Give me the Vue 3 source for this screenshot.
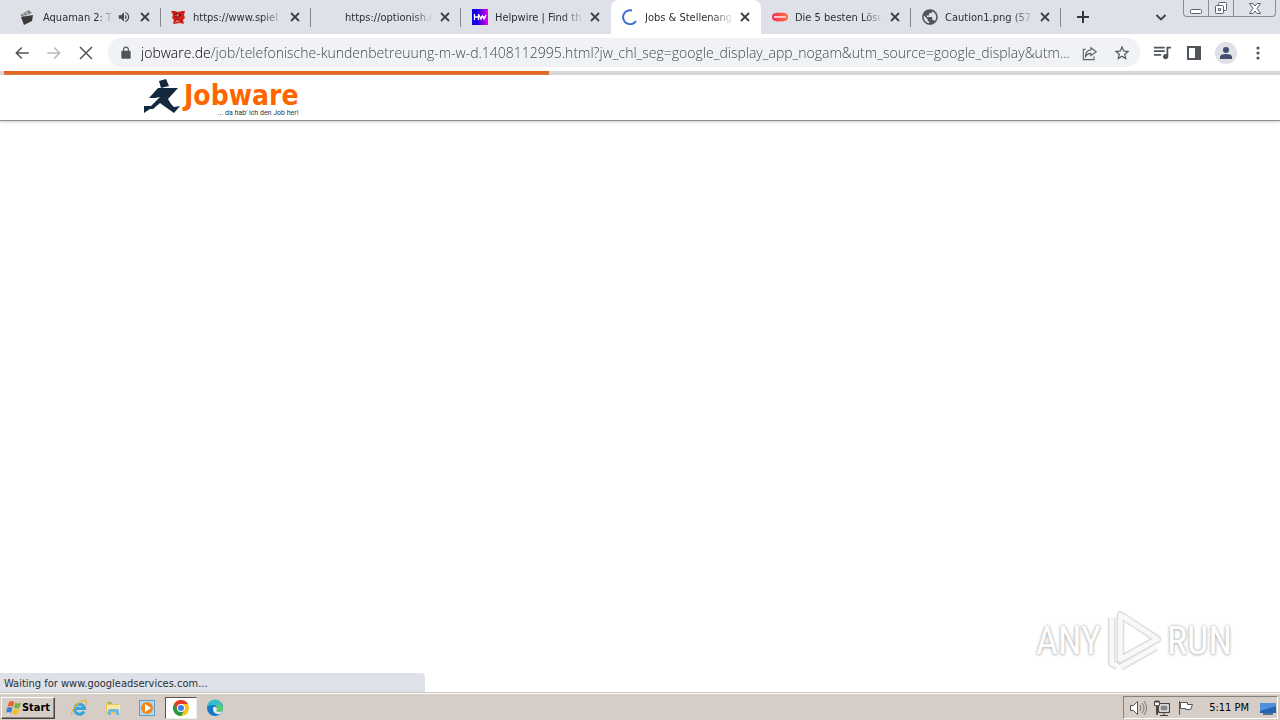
<script setup>
import { ref } from 'vue'

const tabs = [
  { title: 'Aquaman 2: T', icon: 'clap', audio: true },
  { title: 'https://www.spiel', icon: 'red' },
  { title: 'https://optionish.c', icon: 'none' },
  { title: 'Helpwire | Find the', icon: 'hw' },
  { title: 'Jobs & Stellenang', icon: 'spin', active: true },
  { title: 'Die 5 besten Lösu', icon: 'pill' },
  { title: 'Caution1.png (57', icon: 'globe' },
]
const url = ref('jobware.de/job/telefonische-kundenbetreuung-m-w-d.1408112995.html?jw_chl_seg=google_display_app_nogam&utm_source=google_display&utm...')
const progress = 42.7
</script>

<template>
  <div class="screen">
    <div class="strip">
      <div v-for="t in tabs" :key="t.title" class="tab" :class="{ active: t.active }">
        <svg class="fav" viewBox="0 0 16 16" aria-hidden="true">
          <g v-if="t.icon === 'clap'">
            <path d="M0 6 9 1l3 3-9 4z" fill="#888" />
            <path d="m1 8 12-2-1 6-8 4z" fill="#3b3b3b" />
            <path d="m3 5 2 2m1-4 2 3" stroke="#ddd" />
          </g>
          <g v-else-if="t.icon === 'red'">
            <path d="M1 2h4l3 1 4-1h3l-1 4 1 3-2 2 1 4-4-1-7 1 1-4-2-2 1-3z" fill="#d3211b" />
            <path d="m4 7 3-3 4 2-3 2zm0 6 3-3 5 3" fill="#ef6a4c" stroke="#88120e" />
            <path d="m5 5 2 1m3-1-1 2" stroke="#47110d" />
          </g>
          <g v-else-if="t.icon === 'hw'">
            <defs><linearGradient id="hw"><stop offset=".3" stop-color="#1300e8" /><stop offset="1" stop-color="#ec00ec" /></linearGradient></defs>
            <path d="M0 0h16v16H0z" fill="url(#hw)" />
            <path d="M2.500 5v6m0-3h4m0-3v6M7 6l2 4 1.500-3L12 10l2-4m-5 2h5" fill="none" stroke="#fff" stroke-width="1.300" />
          </g>
          <path v-else-if="t.icon === 'spin'" d="M10 1.500A7 7 0 1 0 14 12" fill="none" stroke="#3d70d0" stroke-width="2" />
          <g v-else-if="t.icon === 'pill'">
            <defs><linearGradient id="pl"><stop stop-color="#f32d58" /><stop offset="1" stop-color="#ff7038" /></linearGradient></defs>
            <path d="M4 4q2-1 4 0 2-1 4 0a4 4 0 0 1 0 8q-2 1-4 0-2 1-4 0a4 4 0 0 1 0-8z" fill="url(#pl)" />
            <path d="M2 8h12" stroke="#ffc5c8" stroke-width="2" />
          </g>
          <g v-else-if="t.icon === 'globe'" transform="translate(-1.400 -1.400) scale(.78)">
            <circle cx="12" cy="12" r="9" fill="#dee1e8" />
            <path fill="#50555b" d="M12 2C6.480 2 2 6.480 2 12s4.480 10 10 10 10-4.480 10-10S17.520 2 12 2zm-1 17.930c-3.950-.490-7-3.850-7-7.930 0-.620.080-1.210.210-1.790L9 15v1c0 1.100.900 2 2 2v1.930zm6.900-2.540c-.260-.810-1-1.390-1.900-1.390h-1v-3c0-.550-.450-1-1-1H8v-2h2c.550 0 1-.450 1-1V7h2c1.100 0 2-.900 2-2v-.410c2.930 1.190 5 4.060 5 7.410 0 2.080-.800 3.970-2.100 5.390z" />
          </g>
        </svg>
        <span class="title">{{ t.title }}</span>
        <svg v-if="t.audio" class="audio" viewBox="0 0 24 24" aria-hidden="true"><path fill="#454a50" d="M3 9v6h4l5 5V4L7 9H3zm13.500 3c0-1.770-1.020-3.290-2.500-4.030v8.050c1.480-.730 2.500-2.250 2.500-4.020zM14 3.230v2.060c2.890.860 5 3.540 5 6.710s-2.110 5.850-5 6.710v2.060c4.010-.910 7-4.490 7-8.770s-2.990-7.860-7-8.770z" /></svg>
        <button class="close" aria-label="Close tab"><svg viewBox="0 0 10 10"><path d="m1 1 8 8m0-8-8 8" stroke="#3c4045" stroke-width="1.800" /></svg></button>
      </div>
      <button class="plus" aria-label="New tab"><svg viewBox="0 0 12 12"><path d="M6 0v12M0 6h12" stroke="#33373d" stroke-width="2" /></svg></button>
      <button class="search" aria-label="Search tabs"><svg viewBox="0 0 12 12"><path d="m1.500 4 4.500 4.500L10.500 4" fill="none" stroke="#3c4045" stroke-width="1.800" /></svg></button>
      <div class="winctl">
        <button aria-label="Minimize"><svg viewBox="0 0 14 14"><rect x="1.500" y="8.500" width="11" height="4" rx="1" fill="#fff" stroke="#5a6070" /></svg></button>
        <button aria-label="Restore"><svg viewBox="0 0 14 14"><g fill="#fff" stroke="#5a6070"><rect x="4.500" y="1.500" width="8" height="8" rx="1" /><rect x="1.500" y="4.500" width="8" height="8" rx="1" /><path d="M4.500 7.500h2v2h-2z" /></g></svg></button>
        <button class="x" aria-label="Close"><svg viewBox="0 0 14 14"><path d="M1.500 2.500h3.500l2 2.500 2-2.500h3.500L9 7.500l3.500 5H9l-2-2.500-2 2.500H1.500L5 7.500z" fill="#fff" stroke="#5a6070" /></svg></button>
      </div>
    </div>

    <div class="toolbar">
      <button class="tb" aria-label="Back"><svg viewBox="0 0 24 24"><path fill="#50555b" d="M21 11H6.830l5.590-5.590L11 4l-8 8 8 8 1.410-1.410L6.830 13H21v-2z" /></svg></button>
      <button class="tb" aria-label="Forward"><svg viewBox="0 0 24 24"><path fill="#b7b9bc" d="M3 13h14.170l-5.590 5.590L13 20l8-8-8-8-1.410 1.410L17.170 11H3v2z" /></svg></button>
      <button class="tb" aria-label="Stop"><svg viewBox="0 0 24 24"><path d="m4 4 16 16m0-16L4 20" stroke="#50555b" stroke-width="2" /></svg></button>
      <div class="omni">
        <svg class="lock" viewBox="0 0 24 24" aria-hidden="true"><path fill="#50555b" d="M18 8h-1V6c0-2.760-2.240-5-5-5S7 3.240 7 6v2H6c-1.100 0-2 .900-2 2v10c0 1.100.900 2 2 2h12c1.100 0 2-.900 2-2V10c0-1.100-.900-2-2-2zm-9 0V6c0-1.660 1.340-3 3-3s3 1.340 3 3v2H9z" /></svg>
        <input v-model="url" class="url" aria-label="Address" spellcheck="false">
        <button class="tb" aria-label="Share"><svg viewBox="0 0 18 18"><path d="M4 5H1.500v11.500h12V13M10 3l6 4.500-6 4.500V9.500Q6 9.500 4 13q0-7 6-7.500z" fill="none" stroke="#5f6368" stroke-width="1.300" /></svg></button>
        <button class="tb" aria-label="Bookmark"><svg viewBox="0 0 24 24"><path fill="#50555b" d="M22 9.240l-7.190-.620L12 2 9.190 8.630 2 9.240l5.460 4.730L5.820 21 12 17.270 18.180 21l-1.630-7.030L22 9.240zM12 15.400l-3.760 2.270 1-4.280-3.320-2.880 4.380-.380L12 6.100l1.710 4.040 4.380.380-3.320 2.880 1 4.280L12 15.400z" /></svg></button>
      </div>
      <button class="tb" aria-label="Media"><svg viewBox="2 3 20 20"><path fill="#50555b" d="M15 6H3v2h12V6zm0 4H3v2h12v-2zM3 16h8v-2H3v2zM17 6v8.180c-.310-.110-.650-.180-1-.180-1.660 0-3 1.340-3 3s1.340 3 3 3 3-1.340 3-3V8h3V6h-5z" /></svg></button>
      <button class="tb" aria-label="Side panel"><svg class="small" viewBox="0 0 16 16"><path d="M2 2h12v12H2z" fill="none" stroke="#50555b" stroke-width="2" /><path d="M9 2h6v12H9z" fill="#50555b" /></svg></button>
      <button class="tb" aria-label="Profile"><svg class="avatar" viewBox="0 0 22 22"><circle cx="11" cy="11" r="11" fill="#dfe1e7" /><circle cx="11" cy="8" r="3" fill="#434e6e" /><path d="M5 17v-2q0-3 6-3t6 3v2z" fill="#434e6e" /></svg></button>
      <button class="tb" aria-label="Menu"><svg class="small" viewBox="0 0 16 16"><g fill="#50555b"><circle cx="8" cy="3" r="1.600" /><circle cx="8" cy="8" r="1.600" /><circle cx="8" cy="13" r="1.600" /></g></svg></button>
    </div>

    <main class="page">
      <div class="track"><div class="bar" :style="{ width: progress + '%' }"></div></div>
      <header class="site">
        <a class="brand" href="#">
          <svg viewBox="0 0 38 36" aria-hidden="true"><path d="m15 2 7-2 3 7-8 2zM14 9h20L24 20l3 5 3 3 6-1-6 7-10-7-4-3-7 6H6l-6 4v-7h7l9-9-5 1H5z" fill="#14293d" /></svg>
          <span class="words"><span class="name">Jobware</span><span class="tag">... da hab' ich den Job her!</span></span>
        </a>
      </header>
      <div class="mark">
        <span>ANY</span>
        <svg viewBox="0 0 62 66" aria-hidden="true">
          <g fill="none" stroke-linejoin="round">
            <path d="M17 6v46l38-21zM8 9v47l6 3M17 60l37-21" stroke="#dcdcdc" stroke-width="8" />
            <path d="M17 6v46l38-21zM8 9v47l6 3M17 60l37-21" stroke="#f8f8f8" stroke-width="5" />
          </g>
        </svg>
        <span>RUN</span>
      </div>
      <div class="status">Waiting for www.googleadservices.com...</div>
    </main>

    <footer class="taskbar">
      <button class="start">
        <svg viewBox="0 0 16 16" aria-hidden="true"><path d="M3 2q3-2 5 0L7 7Q4 5 1.500 7z" fill="#e8622a" /><path d="M9 2.500q3 2 6 0L13.500 8q-3 1-5.500-.500z" fill="#76b344" /><path d="M1 8q3-2 5.500 0L5 13q-3-2-5 0z" fill="#3c83cd" /><path d="M7.500 8.500q3 2 6 .5L12 14q-3 1.500-6-.5z" fill="#f5bd2d" /></svg>Start
      </button>
      <button class="app" aria-label="Internet Explorer"><svg viewBox="0 0 18 18"><path d="M14 12.500A5 5 0 1 1 14.500 9.500H5" fill="none" stroke="#35a5dc" stroke-width="3" /><path d="M2 16Q0 13 7 6t9-4q2 1-1 5" fill="none" stroke="#e7b534" stroke-width="1.200" /></svg></button>
      <button class="app" aria-label="Explorer"><svg viewBox="0 0 18 18"><path d="M2 3h5l1 2h7v10H2z" fill="#e8c65a" /><path d="M3 6h13v7H3z" fill="#f8e9a2" /><path d="M4 16v-4q0-2 2-2h7q2 0 2 2v4h-3v-3H7v3z" fill="#72b8dd" /><path d="M4 4h4" stroke="#61a74b" /></svg></button>
      <button class="app" aria-label="Media Player"><svg viewBox="0 0 18 18"><rect x="1.500" y="1.500" width="15" height="15" fill="#b7d9ef" stroke="#5b9dcb" /><circle cx="9" cy="9" r="6" fill="#ee8620" /><path d="m7 5 6 4-6 4z" fill="#fff" /></svg></button>
      <button class="app on" aria-label="Chrome"><svg viewBox="0 0 18 18"><circle cx="9" cy="9" r="8" fill="#fbc116" /><path d="M2.070 5A8 8 0 0 1 16 5H9L5.500 11z" fill="#e33b2e" /><path d="M2.070 5A8 8 0 0 0 9 17l3.500-6H5.500z" fill="#26994a" /><circle cx="9" cy="9" r="4" fill="#fff" /><circle cx="9" cy="9" r="3" fill="#3c7fe8" /></svg></button>
      <button class="app" aria-label="Edge"><svg viewBox="0 0 18 18"><circle cx="9" cy="9" r="8" fill="#1677c7" /><path d="M1 8a8 8 0 0 1 16 1q0 4-4 4-4 0-2-3 0-4-4-4-4 0-6 2z" fill="#35bfc1" /><path d="M10 6q5-1 7 3 0 4-4 4-4 0-2-3 0-3-1-4z" fill="#5bce67" /><path d="M11 10q-2 3 2 3 2 0 3-1-1 4-5 3-4-1-4-5 0-4 4-1z" fill="#e5edf0" /></svg></button>
      <div class="tray">
        <svg viewBox="0 0 18 18" aria-hidden="true"><path d="M1.500 6.500h3l4-4v13l-4-4h-3z" fill="#fff" stroke="#555" /><path d="M11 6q2 3 0 6m2-8q4 5 0 10m2-12q5 7 0 14" fill="none" stroke="#777" /></svg>
        <svg viewBox="0 0 18 18" aria-hidden="true"><path d="M5.500 4.500h11v9h-11z" fill="#aaa" stroke="#444" /><path d="M7 6h8v6H7z" fill="#888" stroke="#fff" /><path d="M7 16.500h8M11 14v2" stroke="#444" /><path d="M1.500 2.500h5v4h-2v9h-1v-9h-2zM3 1v3m2-3v3" fill="#fff" stroke="#444" /></svg>
        <svg viewBox="0 0 18 18" aria-hidden="true"><path d="M2.500 2v14M3.500 3.500h7v2h5l-2 5h-5v-1h-5z" fill="#fff" stroke="#555" /></svg>
        <span class="time">5:11 PM</span>
        <svg viewBox="0 0 18 18" aria-hidden="true"><path d="M1 4h16v10H1z" fill="#2763b4" /><path d="M1 4h16v3L1 12z" fill="#4f91dd" /><path d="M4 15h10" stroke="#53708e" stroke-width="2" /></svg>
      </div>
    </footer>
  </div>
</template>

<style>
html, body { margin: 0; }
</style>

<style scoped>
.screen { min-height: 100vh; display: flex; flex-direction: column; background: #fff; color: #2b2f34; font: 11px/16px "DejaVu Sans Condensed", "DejaVu Sans", sans-serif; }
.screen * { box-sizing: border-box; }
button { border: 0; padding: 0; background: none; color: inherit; font: inherit; display: flex; align-items: center; justify-content: center; }
svg { display: block; flex: none; }
.strip { height: 34px; background: #dee1e8; display: flex; align-items: center; padding-left: 11px; }
.tab { flex: 0 1 150px; min-width: 0; height: 34px; display: flex; align-items: center; padding: 0 11px; position: relative; }
.tab::after { content: ""; position: absolute; right: 0; top: 8px; width: 1px; height: 19px; background: #85898f; }
.tab:nth-child(4)::after, .tab.active::after { display: none; }
.tab.active { background: #fff; border-radius: 8px 8px 0 0; }
.tab:first-child, .tab:nth-child(2) { padding-left: 9px; }
.fav { width: 16px; height: 16px; margin-right: 7px; }
.title { flex: 1; min-width: 0; line-height: 18px; padding-top: 1px; overflow: hidden; white-space: nowrap; mask-image: linear-gradient(to right, #000 78%, rgba(0, 0, 0, .15)); }
.audio { width: 14px; height: 14px; margin-left: 5px; }
.close { width: 10px; height: 16px; margin-left: 9px; flex: none; }
.close svg { width: 10px; height: 10px; }
.plus { width: 44px; height: 34px; flex: none; }
.plus svg, .search svg { width: 12px; height: 12px; }
.search { width: 24px; height: 34px; margin-left: auto; }
.winctl { align-self: flex-start; display: flex; height: 17px; margin: 0 4px 0 10px; border: 1px solid #888e99; border-top: 0; border-radius: 0 0 4px 4px; }
.winctl button { width: 25px; height: 16px; border-right: 1px solid #888e99; }
.winctl button.x { width: 41px; border: 0; }
.winctl svg { width: 14px; height: 14px; }
.toolbar { height: 37px; display: flex; align-items: center; padding: 0 6px; }
.tb { width: 32px; height: 32px; flex: none; }
.tb svg { width: 18px; height: 18px; }
.tb svg.avatar { width: 22px; height: 22px; }
.tb svg.small, .omni .tb:first-of-type svg { width: 16px; height: 16px; }
.omni { flex: 1; min-width: 0; height: 29px; margin: 0 6px; padding: 0 2px 0 11px; border-radius: 14px; background: #f0f2f5; display: flex; align-items: center; }
.lock { width: 14px; height: 14px; margin-right: 8px; }
.url { flex: 1; min-width: 0; height: 28px; border: 0; padding: 0; outline: 0; font: 300 14px/20px "Open Sans", "Noto Sans", sans-serif; color: transparent; background: linear-gradient(to right, #000 69px, #3c4046 69px); background-clip: text; }
.page { flex: 1; display: flex; flex-direction: column; position: relative; }
.track { height: 4px; background: #d8d8d8; padding-left: 4px; }
.bar { height: 4px; background: #e06520; }
.site { height: 46px; border-bottom: 1px solid #8e8e8e; box-shadow: 0 1px 3px #ccc; display: flex; align-items: center; padding: 0 144px; }
.brand { display: flex; color: #f60; text-decoration: none; }
.brand svg { width: 38px; height: 36px; margin-right: 2px; }
.words { display: flex; flex-direction: column; align-items: flex-end; padding-top: 4px; }
.name { font: bold 28px/26px "DejaVu Sans Condensed", "DejaVu Sans", sans-serif; }
.tag { font: 7px/8px "Roboto", sans-serif; color: #263746; }
.mark { position: absolute; right: 48px; bottom: 18px; display: flex; align-items: center; gap: 3px; font: 38px/48px "Liberation Sans Narrow", "Roboto Condensed", "Roboto", sans-serif; color: #fff; text-shadow: 0 0 3px #aaa, 0 1px 3px #ccc; }
.mark svg { width: 60px; height: 66px; }
.status { margin-top: auto; width: 425px; height: 19px; padding: 1px 0 0 4px; line-height: 20px; background: #dee1e8; border-radius: 0 4px 0 0; }
.taskbar { height: 28px; background: #d6cec6; border-top: 1px solid #c5c5bd; box-shadow: inset 0 1px #fff; display: flex; align-items: center; padding: 2px 2px 0 1px; }
.start { width: 54px; height: 22px; border: 1px solid #fff; border-right-color: #444; border-bottom-color: #444; box-shadow: inset -1px -1px #8b8580; font-weight: bold; color: #000; margin-right: 8px; }
.start svg { width: 16px; height: 16px; }
.app { width: 32px; height: 22px; margin-right: 2px; }
.app svg { width: 18px; height: 18px; }
.app.on { background: #fff; border: 1px solid #555; border-right-color: #eee; border-bottom-color: #eee; }
.tray { margin-left: auto; height: 23px; border: 1px solid #858078; border-right-color: #fff; border-bottom-color: #fff; display: flex; align-items: center; gap: 6px; padding: 0 0 0 5px; color: #000; }
.tray svg { width: 18px; height: 18px; }
.time { padding: 0 4px 0 8px; }
</style>
